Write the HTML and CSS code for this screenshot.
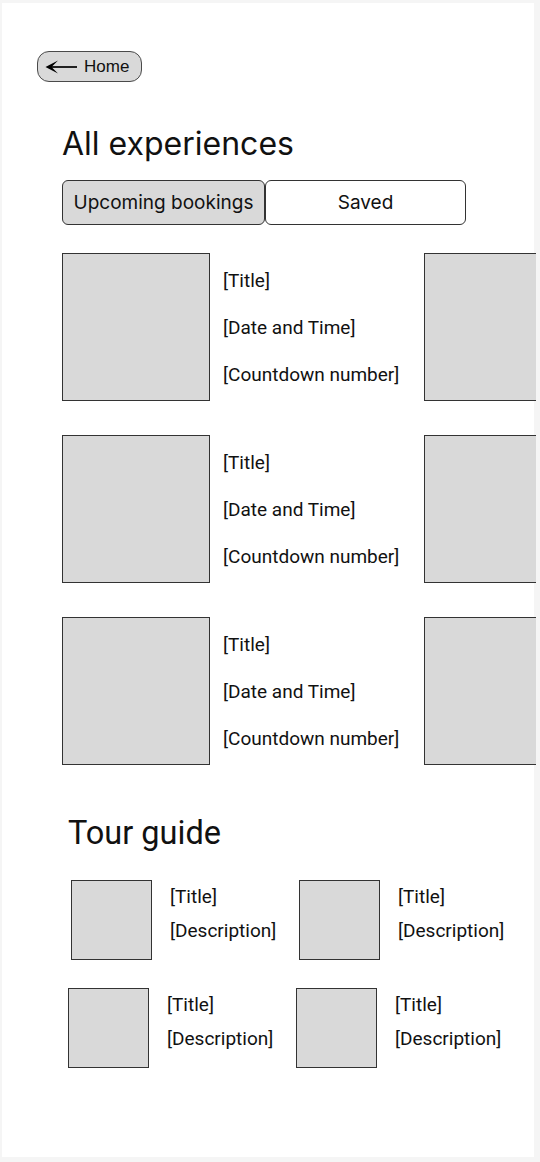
FILE: index.html
```html
<!DOCTYPE html>
<html lang="en">
<head>
<meta charset="utf-8">
<title>All experiences</title>
<link rel="stylesheet" href="styles.css">
</head>
<body>
<div class="page">
  <button class="home">
    <svg class="arrow" width="34" height="16" viewBox="0 0 34 16">
      <path d="M4 8 H33" stroke="#000" stroke-width="1.7" fill="none"/>
      <path d="M1.5 8 L14 1.5 L7.5 8 L14 14.5 Z" fill="#000"/>
    </svg>
    <span>Home</span>
  </button>

  <h1 class="title">All experiences</h1>

  <div class="tabs">
    <div class="tab active">Upcoming bookings</div>
    <div class="tab">Saved</div>
  </div>

  <div class="bookings">
    <div class="booking">
      <div class="thumb"></div>
      <div class="info">
        <div>[Title]</div>
        <div>[Date and Time]</div>
        <div>[Countdown number]</div>
      </div>
      <div class="thumb"></div>
    </div>
    <div class="booking">
      <div class="thumb"></div>
      <div class="info">
        <div>[Title]</div>
        <div>[Date and Time]</div>
        <div>[Countdown number]</div>
      </div>
      <div class="thumb"></div>
    </div>
    <div class="booking">
      <div class="thumb"></div>
      <div class="info">
        <div>[Title]</div>
        <div>[Date and Time]</div>
        <div>[Countdown number]</div>
      </div>
      <div class="thumb"></div>
    </div>
  </div>

  <h2 class="subtitle">Tour guide</h2>

  <div class="guides">
    <div class="guide-row first">
      <div class="guide">
        <div class="gthumb"></div>
        <div class="ginfo"><div>[Title]</div><div>[Description]</div></div>
      </div>
      <div class="guide">
        <div class="gthumb"></div>
        <div class="ginfo"><div>[Title]</div><div>[Description]</div></div>
      </div>
    </div>
    <div class="guide-row second">
      <div class="guide">
        <div class="gthumb"></div>
        <div class="ginfo"><div>[Title]</div><div>[Description]</div></div>
      </div>
      <div class="guide">
        <div class="gthumb"></div>
        <div class="ginfo"><div>[Title]</div><div>[Description]</div></div>
      </div>
    </div>
  </div>
</div>
</body>
</html>
```

FILE: styles.css
```css
html, body {
  margin: 0;
  padding: 0;
  overflow: hidden;
}
body {
  background: #f5f5f5;
  width: 540px;
  height: 1162px;
}
.page {
  margin: 3px 6px 0 2px;
  height: 1154px;
  background: #ffffff;
  display: flow-root;
}
.home {
  display: flex;
  align-items: center;
  gap: 6px;
  margin: 48px 0 0 35px;
  width: 105px;
  height: 31px;
  padding: 0 0 0 6px;
  border: 1px solid #4a4a4a;
  border-radius: 12px;
  background: #d9d9d9;
  font-family: "Liberation Sans", Arial, sans-serif;
  font-size: 17px;
  color: #111;
  box-sizing: border-box;
}
.arrow {
  display: block;
}
.title {
  margin: 42px 0 0 60px;
  font-family: Inter, sans-serif;
  font-weight: 400;
  font-size: 32px;
  line-height: 40px;
  color: #111;
}
.tabs {
  display: flex;
  margin: 16px 0 0 60px;
}
.tab {
  width: 201px;
  height: 45px;
  border: 1px solid #333;
  border-radius: 6px;
  background: #fff;
  font-family: Inter, sans-serif;
  font-size: 19px;
  color: #111;
  display: flex;
  align-items: center;
  justify-content: center;
  box-sizing: border-box;
}
.tab.active {
  width: 203px;
  background: #d9d9d9;
}
.bookings {
  display: flex;
  flex-direction: column;
  gap: 34px;
  margin: 28px 0 0 60px;
}
.booking {
  display: flex;
  gap: 13px;
  width: 474px;
  overflow: hidden;
}
.thumb {
  flex: none;
  width: 148px;
  height: 148px;
  border: 1px solid #333;
  background: #d9d9d9;
  box-sizing: border-box;
}
.info {
  flex: none;
  width: 188px;
  padding-top: 4px;
  font-family: Roboto, sans-serif;
  font-size: 19px;
  line-height: 47px;
  color: #111;
  white-space: nowrap;
}
.subtitle {
  margin: 48px 0 0 66px;
  font-family: Roboto, sans-serif;
  font-weight: 400;
  font-size: 32.5px;
  line-height: 40px;
  color: #111;
}
.guides {
  display: flex;
  flex-direction: column;
  gap: 28px;
  margin-top: 27px;
}
.guide-row {
  display: flex;
}
.guide-row.first {
  margin-left: 69px;
}
.guide-row.second {
  margin-left: 66px;
}
.guide {
  flex: none;
  width: 228px;
  display: flex;
  gap: 18px;
}
.gthumb {
  flex: none;
  width: 81px;
  height: 80px;
  border: 1px solid #333;
  background: #d9d9d9;
  box-sizing: border-box;
}
.ginfo {
  font-family: Roboto, sans-serif;
  font-size: 19px;
  line-height: 34px;
  color: #111;
  white-space: nowrap;
}
```
